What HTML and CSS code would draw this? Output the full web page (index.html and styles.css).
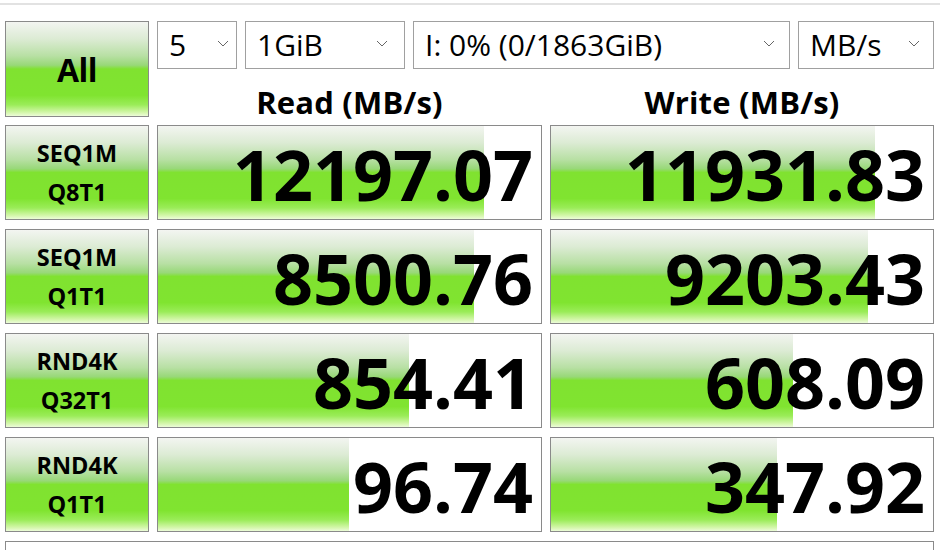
FILE: index.html
```html
<!DOCTYPE html>
<html>
<head>
<meta charset="utf-8">
<link rel="stylesheet" href="styles.css">
</head>
<body>
<div class="topline"></div>
<div class="app">
  <div class="top">
    <div class="btn all">All</div>
    <div class="right">
      <div class="selects">
        <div class="sel w80"><span>5</span><svg class="chev" viewBox="0 0 12 7"><path d="M1 1 L6 6 L11 1" fill="none" stroke="#666" stroke-width="1"/></svg></div>
        <div class="sel w160"><span>1GiB</span><svg class="chev" viewBox="0 0 12 7"><path d="M1 1 L6 6 L11 1" fill="none" stroke="#666" stroke-width="1"/></svg></div>
        <div class="sel w377"><span>I: 0% (0/1863GiB)</span><svg class="chev" viewBox="0 0 12 7"><path d="M1 1 L6 6 L11 1" fill="none" stroke="#666" stroke-width="1"/></svg></div>
        <div class="sel w136"><span>MB/s</span><svg class="chev" viewBox="0 0 12 7"><path d="M1 1 L6 6 L11 1" fill="none" stroke="#666" stroke-width="1"/></svg></div>
      </div>
      <div class="heads">
        <div class="head read">Read (MB/s)</div>
        <div class="head write">Write (MB/s)</div>
      </div>
    </div>
  </div>
  <div class="rows">
    <div class="row">
      <div class="btn label"><span>SEQ1M</span><span>Q8T1</span></div>
      <div class="cell read"><div class="bar" style="width:326px"></div><div class="num">12197.07</div></div>
      <div class="cell write"><div class="bar" style="width:324px"></div><div class="num">11931.83</div></div>
    </div>
    <div class="row">
      <div class="btn label"><span>SEQ1M</span><span>Q1T1</span></div>
      <div class="cell read"><div class="bar" style="width:316px"></div><div class="num">8500.76</div></div>
      <div class="cell write"><div class="bar" style="width:317px"></div><div class="num">9203.43</div></div>
    </div>
    <div class="row">
      <div class="btn label"><span>RND4K</span><span>Q32T1</span></div>
      <div class="cell read"><div class="bar" style="width:251px"></div><div class="num">854.41</div></div>
      <div class="cell write"><div class="bar" style="width:242px"></div><div class="num">608.09</div></div>
    </div>
    <div class="row">
      <div class="btn label"><span>RND4K</span><span>Q1T1</span></div>
      <div class="cell read"><div class="bar" style="width:191px"></div><div class="num">96.74</div></div>
      <div class="cell write"><div class="bar" style="width:226px"></div><div class="num">347.92</div></div>
    </div>
  </div>
  <div class="comment"></div>
</div>
</body>
</html>
```
FILE: styles.css
```css
html, body {
  margin: 0;
  padding: 0;
  background: #ffffff;
  width: 940px;
  height: 550px;
  overflow: hidden;
}
body {
  font-family: "Open Sans", "Noto Sans", "DejaVu Sans", sans-serif;
  color: #000;
}
.topline {
  height: 3px;
  border-bottom: 2px solid #e2e2e2;
}
.app {
  padding: 16px 0 0 5px;
}
.top {
  display: flex;
  gap: 8px;
}
.btn {
  box-sizing: border-box;
  border: 1px solid #8a8a8a;
  background: linear-gradient(to bottom,
    #f3f5f1 0%, #dcebd4 18%, #b8e0a4 36%, #98d878 46%,
    #80e230 50%, #80e430 78%, #9aec58 88%, #d2f6a8 96%, #ecfcd8 100%);
  font-weight: 700;
}
.all {
  width: 144px;
  height: 96px;
  display: flex;
  align-items: center;
  justify-content: center;
  font-size: 32px;
  letter-spacing: -0.5px;
}
.right {
  width: 777px;
}
.selects {
  display: flex;
  gap: 8px;
  height: 48px;
}
.sel {
  box-sizing: border-box;
  height: 48px;
  border: 1px solid #a0a0a0;
  background: #fff;
  display: flex;
  align-items: center;
  justify-content: space-between;
  padding: 0 9px 0 11px;
  font-size: 30px;
}
.sel span {
  margin-top: -1px;
}
.chev {
  width: 12px;
  height: 7px;
  margin-bottom: 4px;
}
.w80 { width: 80px; padding-right: 7px; }
.w160 { width: 160px; padding-right: 16px; }
.w377 { width: 377px; padding-right: 14px; }
.w136 { width: 136px; padding-right: 13px; }
.heads {
  display: flex;
  gap: 8px;
  height: 48px;
}
.head {
  font-size: 31px;
  font-weight: 700;
  text-align: center;
  line-height: 48px;
  padding-top: 9px;
  letter-spacing: 0.2px;
}
.head.read { width: 385px; }
.head.write { width: 384px; }
.rows {
  margin-top: 8px;
  display: flex;
  flex-direction: column;
  gap: 9px;
}
.row {
  display: flex;
  gap: 8px;
  height: 95px;
}
.label {
  width: 144px;
  height: 95px;
  display: flex;
  flex-direction: column;
  align-items: center;
  justify-content: center;
  font-size: 23.5px;
  line-height: 39px;
  padding-top: 1px;
}
.cell {
  box-sizing: border-box;
  height: 95px;
  border: 1px solid #8a8a8a;
  background: #fff;
  position: relative;
  display: flex;
  align-items: center;
  justify-content: flex-end;
}
.cell.read { width: 385px; }
.cell.write { width: 384px; }
.bar {
  position: absolute;
  left: 0;
  top: 0;
  bottom: 0;
  background: linear-gradient(to bottom,
    #f3f5f1 0%, #dcebd4 18%, #b8e0a4 36%, #98d878 46%,
    #80e230 50%, #80e430 78%, #9aec58 88%, #d2f6a8 96%, #ecfcd8 100%);
}
.num {
  position: relative;
  font-size: 70px;
  font-weight: 700;
  letter-spacing: 0;
  padding-right: 8px;
  line-height: 1;
  margin-top: 2px;
}
.comment {
  margin-top: 9px;
  box-sizing: border-box;
  width: 929px;
  height: 9px;
  border: 1px solid #8a8a8a;
  border-bottom: none;
}
```
